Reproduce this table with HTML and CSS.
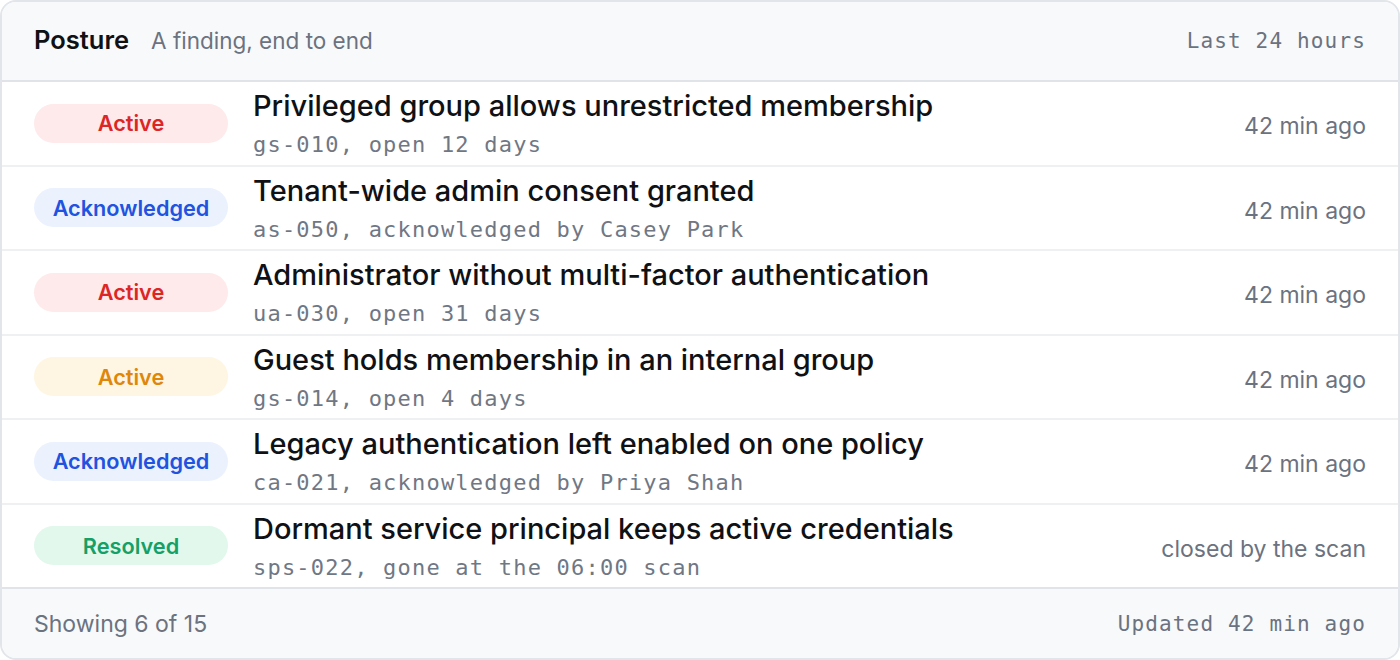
FILE: index.html
```html
<!DOCTYPE html>
<html>
<head>
    <meta charset="utf-8">
    <link rel="stylesheet" href="styles.css">
</head>
<body>
    <div class="card">
        <div class="card-header">
            <div class="header-left">
                <span class="card-title">Posture</span>
                <span class="card-subtitle">A finding, end to end</span>
            </div>
            <span class="mono muted">Last 24 hours</span>
        </div>

        <div class="finding-list">
            <div class="finding">
                <span class="badge badge-red">Active</span>
                <div class="finding-body">
                    <div class="finding-title">Privileged group allows unrestricted membership</div>
                    <div class="finding-meta mono">gs-010, open 12 days</div>
                </div>
                <span class="finding-time">42 min ago</span>
            </div>
            <div class="finding">
                <span class="badge badge-blue">Acknowledged</span>
                <div class="finding-body">
                    <div class="finding-title">Tenant-wide admin consent granted</div>
                    <div class="finding-meta mono">as-050, acknowledged by Casey Park</div>
                </div>
                <span class="finding-time">42 min ago</span>
            </div>
            <div class="finding">
                <span class="badge badge-red">Active</span>
                <div class="finding-body">
                    <div class="finding-title">Administrator without multi-factor authentication</div>
                    <div class="finding-meta mono">ua-030, open 31 days</div>
                </div>
                <span class="finding-time">42 min ago</span>
            </div>
            <div class="finding">
                <span class="badge badge-amber">Active</span>
                <div class="finding-body">
                    <div class="finding-title">Guest holds membership in an internal group</div>
                    <div class="finding-meta mono">gs-014, open 4 days</div>
                </div>
                <span class="finding-time">42 min ago</span>
            </div>
            <div class="finding">
                <span class="badge badge-blue">Acknowledged</span>
                <div class="finding-body">
                    <div class="finding-title">Legacy authentication left enabled on one policy</div>
                    <div class="finding-meta mono">ca-021, acknowledged by Priya Shah</div>
                </div>
                <span class="finding-time">42 min ago</span>
            </div>
            <div class="finding">
                <span class="badge badge-green">Resolved</span>
                <div class="finding-body">
                    <div class="finding-title">Dormant service principal keeps active credentials</div>
                    <div class="finding-meta mono">sps-022, gone at the 06:00 scan</div>
                </div>
                <span class="finding-time">closed by the scan</span>
            </div>
        </div>

        <div class="card-footer">
            <span class="muted">Showing 6 of 15</span>
            <span class="mono muted">Updated 42 min ago</span>
        </div>
    </div>
</body>
</html>
```

FILE: styles.css
```css
* {
    box-sizing: border-box;
}

body {
    margin: 0;
    background-color: #ffffff;
    color: #111418;
    font-family: Inter, "Noto Sans", sans-serif;
}

.card {
    display: flex;
    flex-direction: column;
    height: 100vh;
    border: 2px solid #e2e5e9;
    border-radius: 16px;
    overflow: hidden;
    background-color: #ffffff;
}

.mono {
    font-family: "DejaVu Sans Mono", "Liberation Mono", monospace;
    font-size: 21px;
    letter-spacing: 0.055em;
}

.muted {
    color: #6b7280;
}

/* header */
.card-header {
    height: 80px;
    flex-shrink: 0;
    display: flex;
    align-items: center;
    justify-content: space-between;
    padding: 0 32px;
    background-color: #f8f9fa;
    border-bottom: 2px solid #e0e3e7;
}

.header-left {
    display: flex;
    align-items: baseline;
    gap: 22px;
    padding-bottom: 3px;
}

.card-title {
    font-size: 25.5px;
    font-weight: 600;
    color: #0f1114;
}

.card-subtitle {
    font-size: 22.5px;
    color: #6b7280;
}

/* rows */
.finding-list {
    flex-grow: 1;
    display: flex;
    flex-direction: column;
}

.finding {
    flex: 1;
    display: grid;
    grid-template-columns: 194px 1fr auto;
    column-gap: 25px;
    align-items: center;
    padding: 0 32px;
    border-bottom: 2px solid #eef0f2;
}

.finding:last-child {
    border-bottom: none;
}

.badge {
    height: 39px;
    border-radius: 20px;
    display: flex;
    align-items: center;
    justify-content: center;
    font-size: 21.7px;
    font-weight: 600;
}

.badge-red {
    background-color: #feeaea;
    color: #dc2626;
}

.badge-blue {
    background-color: #ebf2fe;
    color: #2153e0;
}

.badge-amber {
    background-color: #fef6e2;
    color: #de870a;
}

.badge-green {
    background-color: #e2f8ec;
    color: #14a066;
}

.finding-body {
    display: flex;
    flex-direction: column;
    gap: 8px;
    padding-top: 2px;
}

.finding-title {
    font-size: 29px;
    line-height: 34px;
    font-weight: 500;
    color: #0f1114;
}

.finding-meta {
    font-size: 22px;
    line-height: 28px;
    color: #707784;
}

.finding-time {
    font-size: 23px;
    color: #6b7280;
    padding-top: 6px;
}

/* footer */
.card-footer {
    height: 71px;
    flex-shrink: 0;
    display: flex;
    align-items: center;
    justify-content: space-between;
    padding: 0 32px;
    background-color: #f8f9fa;
    border-top: 2px solid #e0e3e7;
}

.card-footer .muted {
    font-size: 23px;
}

.card-footer .mono {
    font-size: 21px;
}
```
